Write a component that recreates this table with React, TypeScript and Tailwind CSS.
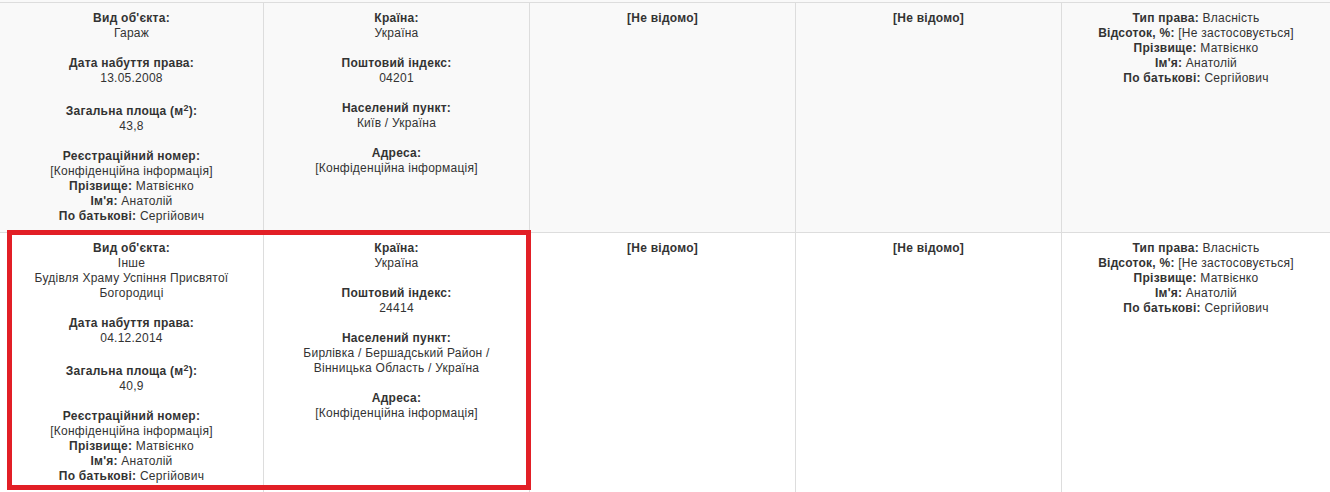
import React from 'react';

type Field = { label: string; value?: string[]; sup?: boolean };

const Group: React.FC<{ field: Field; last?: boolean }> = ({ field, last }) => (
  <div className={last ? '' : 'mb-[15px]'}>
    <div className={`font-bold ${field.sup ? 'pt-[3px]' : ''}`}>
      {field.sup ? (
        <>
          Загальна площа (м<sup className="text-[9px]">2</sup>):
        </>
      ) : (
        field.label
      )}
    </div>
    {field.value?.map((v, i) => (
      <div key={i}>{v}</div>
    ))}
  </div>
);

const Line: React.FC<{ label: string; value: string }> = ({ label, value }) => (
  <div>
    <span className="font-bold">{label}</span> {value}
  </div>
);

const Owner: React.FC = () => (
  <>
    <Line label="Прізвище:" value="Матвієнко" />
    <Line label="Ім'я:" value="Анатолій" />
    <Line label="По батькові:" value="Сергійович" />
  </>
);

const ObjectCell: React.FC<{ kind: string[]; date: string; area: string }> = ({ kind, date, area }) => (
  <div className="p-2 border-r border-[#dddddd]">
    <Group field={{ label: "Вид об'єкта:", value: kind }} />
    <Group field={{ label: 'Дата набуття права:', value: [date] }} />
    <Group field={{ label: '', value: [area], sup: true }} />
    <Group field={{ label: 'Реєстраційний номер:', value: ['[Конфіденційна інформація]'] }} last />
    <Owner />
  </div>
);

const PlaceCell: React.FC<{ index: string; city: string[] }> = ({ index, city }) => (
  <div className="p-2 border-r border-[#dddddd]">
    <Group field={{ label: 'Країна:', value: ['Україна'] }} />
    <Group field={{ label: 'Поштовий індекс:', value: [index] }} />
    <Group field={{ label: 'Населений пункт:', value: city }} />
    <Group field={{ label: 'Адреса:', value: ['[Конфіденційна інформація]'] }} last />
  </div>
);

const UnknownCell: React.FC = () => (
  <div className="p-2 border-r border-[#dddddd] font-bold">[Не відомо]</div>
);

const RightsCell: React.FC = () => (
  <div className="p-2">
    <Line label="Тип права:" value="Власність" />
    <Line label="Відсоток, %:" value="[Не застосовується]" />
    <Owner />
  </div>
);

export default function App() {
  return (
    <div
      className="relative w-[1330px] h-[492px] overflow-hidden bg-white text-[12px] leading-[15px] tracking-[0.25px] text-[#333333] text-center"
      style={{ fontFamily: '"Liberation Sans", Arial, sans-serif' }}
    >
      <div className="h-[2px] bg-[#f9f9f9]" />
      <div className="grid grid-cols-[264px_266px_266px_266px_1fr] bg-[#f9f9f9] border-t border-[#dddddd]">
        <ObjectCell kind={['Гараж']} date="13.05.2008" area="43,8" />
        <PlaceCell index="04201" city={['Київ / Україна']} />
        <UnknownCell />
        <UnknownCell />
        <RightsCell />
      </div>
      <div className="grid grid-cols-[264px_266px_266px_266px_1fr] bg-white border-t border-[#dddddd]">
        <ObjectCell
          kind={['Інше', 'Будівля Храму Успіння Присвятої', 'Богородиці']}
          date="04.12.2014"
          area="40,9"
        />
        <PlaceCell
          index="24414"
          city={['Бирлівка / Бершадський Район /', 'Вінницька Область / Україна']}
        />
        <UnknownCell />
        <UnknownCell />
        <RightsCell />
      </div>
      <div className="absolute left-[7px] top-[230px] w-[524px] h-[260px] border-[5px] border-[#e21f26] pointer-events-none" />
    </div>
  );
}
